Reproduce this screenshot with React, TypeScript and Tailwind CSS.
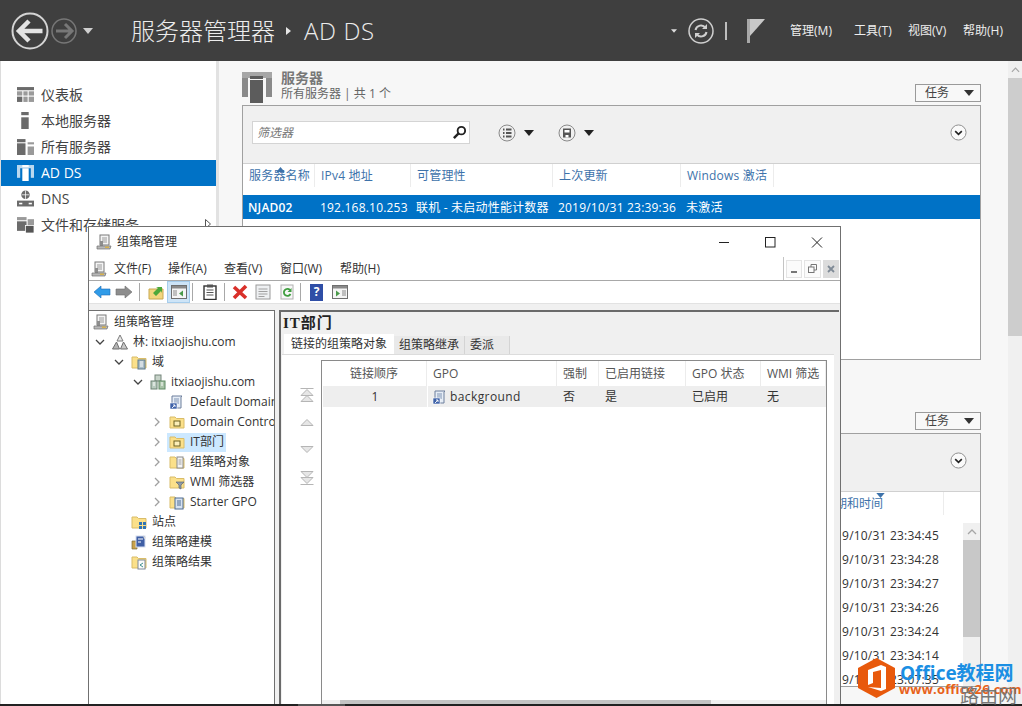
import React from 'react';

const Tri = ({ className }: { className: string }) => (
  <svg viewBox="0 0 10 6" className={className} fill="currentColor">
    <path d="M0 0h10L5 6z" />
  </svg>
);

const CircleChevron = () => (
  <svg viewBox="0 0 18 18" className="w-[17px] h-[17px]" fill="none">
    <circle cx="9" cy="9" r="8" fill="#fafafa" stroke="#8a8a8a" />
    <path d="M5.5 7.5L9 11l3.5-3.5" stroke="#222" strokeWidth="1.7" />
  </svg>
);

const TaskButton = () => (
  <div className="w-[66px] h-[18px] border border-[#9a9a9a] bg-[#f8f8f8] flex items-center justify-between pl-[9px] pr-[6px] text-[12px] text-[#444]">
    <span>任务</span>
    <Tri className="w-[10px] h-[6px] text-[#333]" />
  </div>
);

// sidebar icons
const NavIcon = ({ name, active }: { name: string; active?: boolean }) => {
  const c = active ? '#ffffff' : '#6b6b6b';
  const d = active ? '#b9d8ef' : '#9a9a9a';
  return (
    <svg viewBox="0 0 16 16" className="w-[17px] h-[17px] shrink-0">
      {name === 'dash' && (
        <>
          <rect x="0" y="1" width="16" height="3" fill={c} />
          <rect x="0" y="5" width="5" height="4" fill={d} />
          <rect x="6" y="5" width="4" height="4" fill={d} />
          <rect x="11" y="5" width="5" height="4" fill={d} />
          <rect x="0" y="10" width="5" height="5" fill={c} />
          <rect x="6" y="10" width="4" height="5" fill={d} />
          <rect x="11" y="10" width="5" height="5" fill={d} />
        </>
      )}
      {name === 'local' && (
        <>
          <rect x="4" y="0" width="7" height="3" fill={c} />
          <rect x="4" y="5" width="7" height="11" fill={c} />
        </>
      )}
      {name === 'all' && (
        <>
          <rect x="0" y="1" width="8" height="3" fill={c} />
          <rect x="0" y="5" width="8" height="11" fill={c} />
          <rect x="10" y="4" width="6" height="2" fill={d} />
          <rect x="10" y="8" width="6" height="8" fill={d} />
        </>
      )}
      {name === 'adds' && (
        <>
          <rect x="0" y="1" width="16" height="3" fill={d} />
          <rect x="0" y="1" width="3" height="12" fill={d} />
          <rect x="13" y="1" width="3" height="12" fill={d} />
          <rect x="5" y="4" width="6" height="12" fill={c} />
          <rect x="5" y="1" width="6" height="2" fill={c} />
        </>
      )}
      {name === 'dns' && (
        <>
          <circle cx="8" cy="4.5" r="4" fill={c} />
          <path d="M4.5 4.5h7M8 .5v8" stroke="#fff" strokeWidth="0.7" />
          <rect x="0" y="10" width="16" height="5.5" fill={c} />
          <rect x="2" y="12" width="3" height="1.5" fill="#fff" />
          <rect x="11" y="12" width="3" height="1.5" fill="#fff" />
        </>
      )}
      {name === 'files' && (
        <>
          <rect x="0" y="1" width="9" height="3" fill={d} />
          <rect x="0" y="5" width="9" height="9" fill={c} />
          <rect x="10" y="3" width="6" height="7" fill={d} />
          <rect x="8" y="9" width="8" height="7" fill="#555" stroke="#fff" strokeWidth="0.7" />
        </>
      )}
    </svg>
  );
};

const navItems = [
  { name: 'dash', label: '仪表板' },
  { name: 'local', label: '本地服务器' },
  { name: 'all', label: '所有服务器' },
  { name: 'adds', label: 'AD DS', active: true },
  { name: 'dns', label: 'DNS' },
  { name: 'files', label: '文件和存储服务', more: true },
];

const serverCols = [
  { label: '服务器名称', w: 'w-[72px]' },
  { label: 'IPv4 地址', w: 'w-[96px]' },
  { label: '可管理性', w: 'w-[142px]' },
  { label: '上次更新', w: 'w-[128px]' },
  { label: 'Windows 激活', w: 'w-[93px]' },
];

const serverRow = [
  { label: 'NJAD02', w: 'w-[72px] font-semibold' },
  { label: '192.168.10.253', w: 'w-[96px]' },
  { label: '联机 - 未启动性能计数器', w: 'w-[142px]' },
  { label: '2019/10/31 23:39:36', w: 'w-[128px]' },
  { label: '未激活', w: 'w-[93px]' },
];

const eventTimes = [
  '2019/10/31 23:34:45',
  '2019/10/31 23:34:28',
  '2019/10/31 23:34:27',
  '2019/10/31 23:34:26',
  '2019/10/31 23:34:24',
  '2019/10/31 23:34:14',
  '2019/10/31 23:07:35',
];

// mmc icons
const GpmIcon = () => (
  <svg viewBox="0 0 16 16" className="w-[16px] h-[16px] shrink-0">
    <rect x="4" y="1" width="9" height="10" fill="#f4f4f4" stroke="#7a7a7a" />
    <path d="M6 4h5M6 6h5M6 8h5" stroke="#9a9a9a" />
    <rect x="4" y="7" width="3" height="5" fill="#8d8d8d" />
    <path d="M1 12h14l-1 3H1z" fill="#b8b8b8" stroke="#707070" strokeWidth="0.7" />
    <rect x="9" y="12.5" width="4" height="1.5" fill="#d7b24e" />
  </svg>
);

const ForestIcon = () => (
  <svg viewBox="0 0 16 16" className="w-[16px] h-[16px] shrink-0">
    <path d="M8 1l3 6H5z" fill="#e8e8e8" stroke="#7d7d7d" />
    <path d="M4.5 8l3 7h-7z" fill="#b4b4b4" stroke="#6f6f6f" />
    <path d="M11.5 8l4 7h-7z" fill="#c8c8c8" stroke="#6f6f6f" />
  </svg>
);

const Folder = ({ children }: { children?: React.ReactNode }) => (
  <svg viewBox="0 0 16 16" className="w-[16px] h-[16px] shrink-0">
    <path d="M1 3h5l1.5 1.5H15V14H1z" fill="#fbe08a" stroke="#d9bc68" />
    {children}
  </svg>
);

const DomainIcon = () => (
  <svg viewBox="0 0 16 16" className="w-[16px] h-[16px] shrink-0">
    <rect x="5" y="1" width="6" height="6" fill="#c7d3c9" stroke="#74857a" />
    <rect x="1" y="7" width="6" height="8" fill="#b9cbbf" stroke="#6d8375" />
    <rect x="9" y="7" width="6" height="8" fill="#a9c3a9" stroke="#5f8a65" />
    <path d="M3 9h2M3 11h2M11 9h2M11 11h2" stroke="#fff" />
  </svg>
);

const GpoIcon = () => (
  <svg viewBox="0 0 16 16" className="w-[16px] h-[16px] shrink-0">
    <path d="M3 2h10l-1 1v11H3z" fill="#e6edf6" stroke="#6d7f9c" />
    <path d="M5 5h5M5 7h5M5 9h5" stroke="#7f93b3" />
    <rect x="1" y="9" width="7" height="6" fill="#3e62a8" stroke="#fff" strokeWidth="0.6" />
    <path d="M3 14l3-3M4 11h2v2" stroke="#fff" strokeWidth="0.9" fill="none" />
  </svg>
);

const TreeIcon = ({ name }: { name: string }) => {
  if (name === 'gpm') return <GpmIcon />;
  if (name === 'forest') return <ForestIcon />;
  if (name === 'domain') return <DomainIcon />;
  if (name === 'gpo') return <GpoIcon />;
  if (name === 'domains')
    return (
      <Folder>
        <rect x="7" y="6" width="7" height="9" fill="#a9bcc7" stroke="#5f7a8a" />
        <path d="M9 8h3M9 10h3M9 12h3" stroke="#fff" />
      </Folder>
    );
  if (name === 'ou')
    return (
      <Folder>
        <rect x="5" y="7" width="6" height="5" fill="#fbeeb8" stroke="#6d6020" />
      </Folder>
    );
  if (name === 'objs')
    return (
      <Folder>
        <rect x="8" y="3" width="6" height="11" fill="#f5f5f5" stroke="#8a8a8a" />
        <path d="M9.5 6h3M9.5 8h3M9.5 10h3" stroke="#a0a0a0" />
      </Folder>
    );
  if (name === 'wmi')
    return (
      <Folder>
        <path d="M7 8h8l-3 3v4l-2-1v-3z" fill="#8e9aa6" stroke="#5a6672" strokeWidth="0.7" />
      </Folder>
    );
  if (name === 'starter')
    return (
      <Folder>
        <rect x="6" y="4" width="8" height="11" fill="#d6e2f0" stroke="#4f6d94" />
        <path d="M8 7h4M8 9h4M8 11h4" stroke="#4f6d94" />
      </Folder>
    );
  if (name === 'sites')
    return (
      <Folder>
        <rect x="8" y="8" width="3" height="3" fill="#2f74b5" />
        <rect x="12" y="8" width="3" height="3" fill="#2f74b5" />
        <rect x="8" y="12" width="3" height="3" fill="#2f74b5" />
        <rect x="12" y="12" width="3" height="3" fill="#2f74b5" />
      </Folder>
    );
  if (name === 'model')
    return (
      <svg viewBox="0 0 16 16" className="w-[16px] h-[16px] shrink-0">
        <path d="M1 7h5v8H1z" fill="#c9a24a" stroke="#7a6a3a" strokeWidth="0.7" />
        <rect x="5" y="2" width="9" height="11" fill="#3f5fa5" stroke="#d6def0" />
        <path d="M7 5h5M7 8h3" stroke="#fff" />
        <path d="M12 1l3 3-2 1z" fill="#d8d8d8" />
      </svg>
    );
  return (
    <Folder>
      <rect x="7" y="6" width="7" height="9" fill="#fafafa" stroke="#7f8a9a" />
      <path d="M12 9l-3 2 3 2" stroke="#3f8f8f" fill="none" />
    </Folder>
  );
};

const treeRows = [
  { label: '组策略管理', icon: 'gpm', indent: 'pl-[4px]' },
  { label: '林: itxiaojishu.com', icon: 'forest', indent: 'pl-[4px]', chev: 'open' },
  { label: '域', icon: 'domains', indent: 'pl-[23px]', chev: 'open' },
  { label: 'itxiaojishu.com', icon: 'domain', indent: 'pl-[42px]', chev: 'open' },
  { label: 'Default Domain Policy', icon: 'gpo', indent: 'pl-[61px]', chev: 'none' },
  { label: 'Domain Controllers', icon: 'ou', indent: 'pl-[61px]', chev: 'closed' },
  { label: 'IT部门', icon: 'ou', indent: 'pl-[61px]', chev: 'closed', selected: true },
  { label: '组策略对象', icon: 'objs', indent: 'pl-[61px]', chev: 'closed' },
  { label: 'WMI 筛选器', icon: 'wmi', indent: 'pl-[61px]', chev: 'closed' },
  { label: 'Starter GPO', icon: 'starter', indent: 'pl-[61px]', chev: 'closed' },
  { label: '站点', icon: 'sites', indent: 'pl-[23px]', chev: 'none' },
  { label: '组策略建模', icon: 'model', indent: 'pl-[23px]', chev: 'none' },
  { label: '组策略结果', icon: 'result', indent: 'pl-[23px]', chev: 'none' },
];

const gpoCols = [
  { label: '链接顺序', w: 'w-[105px]', align: 'justify-center' },
  { label: 'GPO', w: 'w-[130px]', align: 'pl-[6px]' },
  { label: '强制', w: 'w-[42px]', align: 'pl-[6px]' },
  { label: '已启用链接', w: 'w-[87px]', align: 'pl-[6px]' },
  { label: 'GPO 状态', w: 'w-[75px]', align: 'pl-[6px]' },
  { label: 'WMI 筛选', w: 'w-[65px]', align: 'pl-[6px]' },
];

const menus = [
  { label: '文件(F)', w: 'w-[54px]' },
  { label: '操作(A)', w: 'w-[56px]' },
  { label: '查看(V)', w: 'w-[56px]' },
  { label: '窗口(W)', w: 'w-[60px]' },
  { label: '帮助(H)', w: 'w-[50px]' },
];

const Toolbar = () => (
  <div className="h-[23px] bg-white border-b border-[#e2e2e2] flex items-center pl-[4px] shrink-0">
    <svg viewBox="0 0 18 16" className="w-[18px] h-[16px] shrink-0">
      <path d="M1 8l7-6v3h9v6H8v3z" fill="#2f9be8" stroke="#1c6db5" strokeWidth="0.6" />
    </svg>
    <svg viewBox="0 0 18 16" className="w-[18px] h-[16px] ml-[4px] shrink-0">
      <path d="M17 8l-7-6v3H1v6h9v3z" fill="#8d8d8d" stroke="#6d6d6d" strokeWidth="0.6" />
    </svg>
    <div className="w-px h-[18px] bg-[#a8a8a8] ml-[6px] shrink-0" />
    <svg viewBox="0 0 16 16" className="w-[16px] h-[16px] ml-[8px] shrink-0">
      <path d="M1 5h14v10H1z" fill="#f3d67e" stroke="#c9a850" />
      <path d="M5 9l5-5-2-1h6v6l-1-2-5 5z" fill="#4ea83a" />
    </svg>
    <div className="w-[23px] h-[22px] ml-[3px] bg-[#cde4f7] border border-[#a6cdec] flex items-center justify-center shrink-0">
      <svg viewBox="0 0 16 14" className="w-[16px] h-[14px]">
        <rect x="0.5" y="0.5" width="15" height="13" fill="#f5f5f5" stroke="#6f6f6f" />
        <rect x="1" y="1" width="14" height="2.5" fill="#8a8a8a" />
        <path d="M2 6h4M2 8h4M2 10h4" stroke="#8a8a8a" />
        <path d="M12 5.5v6l-4-3z" fill="#4a9a4a" />
      </svg>
    </div>
    <div className="w-px h-[18px] bg-[#a8a8a8] ml-[2px] shrink-0" />
    <svg viewBox="0 0 14 16" className="w-[14px] h-[16px] ml-[10px] shrink-0">
      <rect x="1" y="2" width="12" height="13.5" fill="#fff" stroke="#333" strokeWidth="1.4" />
      <rect x="4" y="0.5" width="6" height="3" fill="#555" />
      <path d="M3.5 6h7M3.5 8.5h7M3.5 11h7" stroke="#555" />
    </svg>
    <div className="w-px h-[18px] bg-[#a8a8a8] ml-[7px] shrink-0" />
    <svg viewBox="0 0 16 16" className="w-[16px] h-[16px] ml-[7px] shrink-0">
      <path d="M2 3l12 11M14 2L2 14" stroke="#d9302a" strokeWidth="3.6" />
    </svg>
    <svg viewBox="0 0 16 16" className="w-[16px] h-[16px] ml-[7px] shrink-0">
      <rect x="1" y="1" width="14" height="14" fill="#eef0f2" stroke="#9a9a9a" />
      <path d="M3.5 5h9M3.5 7.5h9M3.5 10h9M3.5 12.5h6" stroke="#a0a0a0" />
    </svg>
    <svg viewBox="0 0 16 16" className="w-[16px] h-[16px] ml-[8px] shrink-0">
      <rect x="2" y="1" width="12" height="14" fill="#f7f7f7" stroke="#b0b0b0" />
      <path d="M11 6a3.5 3.500 0 1 0 0.5 4" fill="none" stroke="#3e9d3e" strokeWidth="1.8" />
      <path d="M12.5 4v4h-4z" fill="#3e9d3e" />
    </svg>
    <div className="w-px h-[18px] bg-[#a8a8a8] ml-[5px] shrink-0" />
    <div className="w-[13px] h-[17px] ml-[9px] bg-[#2f4ea6] flex items-center justify-center text-white text-[12px] font-bold shrink-0">?</div>
    <svg viewBox="0 0 16 14" className="w-[16px] h-[14px] ml-[9px] shrink-0">
      <rect x="0.5" y="0.5" width="15" height="13" fill="#f5f5f5" stroke="#6f6f6f" />
      <rect x="1" y="1" width="14" height="2.5" fill="#8a8a8a" />
      <path d="M10 6h4M10 8h4M10 10h4" stroke="#8a8a8a" />
      <path d="M4 5.5v6l4-3z" fill="#4a9a4a" />
    </svg>
  </div>
);

const MoveIcon = ({ dir, double, className }: { dir: 'up' | 'down'; double?: boolean; className?: string }) => (
  <svg viewBox="0 0 16 16" className={`w-[16px] h-[16px] ${className ?? ''}`} fill="none" stroke="#b5b5b5">
    {dir === 'up' ? (
      <>
        {double && <path d="M1.5 1.500h13" />}
        {double ? <path d="M8 2.500l6 6H2z" fill="#e6e6e6" /> : <path d="M8 4.500l6 6H2z" fill="#e6e6e6" />}
        {double && <path d="M8 8.500l6 6H2z" fill="#e6e6e6" />}
      </>
    ) : (
      <>
        {double ? <path d="M8 13.500l6-6H2z" fill="#e6e6e6" /> : <path d="M8 11.500l6-6H2z" fill="#e6e6e6" />}
        {double && <path d="M8 7.500l6-6H2z" fill="#e6e6e6" />}
        {double && <path d="M1.5 14.500h13" />}
      </>
    )}
  </svg>
);

const GpmWindow = () => (
  <div className="absolute left-[88px] top-[226px] w-[753px] h-[478px] bg-[#f0f0f0] border border-[#707070] border-b-0 flex flex-col overflow-hidden">
    {/* title bar */}
    <div className="h-[30px] bg-white flex items-center pl-[7px] shrink-0">
      <GpmIcon />
      <span className="ml-[5px] text-[12px] text-[#333]">组策略管理</span>
      <svg viewBox="0 0 110 14" className="w-[110px] h-[14px] ml-auto mr-[11px]" fill="none" stroke="#222">
        <path d="M0 7.5h10" />
        <rect x="46.5" y="2.5" width="9.5" height="9.500" />
        <path d="M93 2.5l10 10M103 2.5l-10 10" />
      </svg>
    </div>
    {/* menu bar */}
    <div className="h-[24px] bg-white border-b border-[#a8a8a8] flex items-center pl-[2px] shrink-0 text-[12px] text-[#333]">
      <GpmIcon />
      <div className="flex ml-[7px]">
        {menus.map((m) => (
          <span key={m.label} className={`${m.w} whitespace-nowrap`}>{m.label}</span>
        ))}
      </div>
      <div className="ml-auto mr-[1px] h-[23px] flex items-center gap-[2px] border-l border-[#c4c4c4] pl-[2px]">
        <div className="w-[16px] h-[18px] bg-[#fbfbfb] border border-[#e4e4e4] flex items-end justify-center pb-[4px]">
          <div className="w-[6px] h-[2px] bg-[#777]" />
        </div>
        <div className="w-[17px] h-[18px] bg-[#fbfbfb] border border-[#e4e4e4] flex items-center justify-center">
          <svg viewBox="0 0 9 9" className="w-[9px] h-[9px]" fill="none" stroke="#777">
            <rect x="0.5" y="3" width="5.5" height="5.5" />
            <path d="M3 3V0.5h5.500V6H6" />
          </svg>
        </div>
        <div className="w-[16px] h-[18px] bg-[#dcdcdc] flex items-center justify-center">
          <svg viewBox="0 0 8 8" className="w-[8px] h-[8px]" stroke="#7f8a96" strokeWidth="1.8">
            <path d="M1 1l6 6M7 1L1 7" />
          </svg>
        </div>
      </div>
    </div>
    <Toolbar />
    {/* body */}
    <div className="flex-1 flex pt-[6px] min-h-0">
      <div className="w-[186px] bg-white border-r border-t border-[#6f6f6f] overflow-hidden pt-[1px] shrink-0">
        {treeRows.map((r) => (
          <div key={r.label} className={`h-[20px] flex items-center whitespace-nowrap text-[12px] text-[#333] ${r.indent}`}>
            {r.chev && (
              <div className="w-[19px] shrink-0 flex pl-[2px]">
                {r.chev === 'open' && (
                  <svg viewBox="0 0 10 10" className="w-[10px] h-[10px]" fill="none" stroke="#444" strokeWidth="1.3">
                    <path d="M1 3l4 4 4-4" />
                  </svg>
                )}
                {r.chev === 'closed' && (
                  <svg viewBox="0 0 10 10" className="w-[10px] h-[10px]" fill="none" stroke="#a0a0a0" strokeWidth="1.3">
                    <path d="M3 1l4 4-4 4" />
                  </svg>
                )}
              </div>
            )}
            {r.selected ? (
              <div className="flex items-center h-[19px] -ml-[2px] pl-[2px] pr-[2px] bg-[#cce8ff]">
                <TreeIcon name={r.icon} />
                <span className="ml-[5px]">{r.label}</span>
              </div>
            ) : (
              <>
                <TreeIcon name={r.icon} />
                <span className="ml-[5px]">{r.label}</span>
              </>
            )}
          </div>
        ))}
      </div>
      <div className="w-[4px] shrink-0" />
      <div className="flex-1 border-l-2 border-t-2 border-[#6a6a6a] flex flex-col mr-[1px] min-w-0">
        <div className="h-[23px] pl-[2px] pt-[1px] text-[15px] leading-[20px] tracking-[1px] font-bold text-[#222] font-['Liberation_Serif','Noto_Sans_CJK_SC',serif]">IT部门</div>
        <div className="h-[19px] flex items-end pl-[3px] text-[12px] text-[#333] shrink-0">
          <div className="h-[20px] w-[110px] bg-white flex items-center justify-center">链接的组策略对象</div>
          <div className="h-[18px] w-[71px] bg-[#e9e9e9] border-r border-[#d4d4d4] flex items-center justify-center">组策略继承</div>
          <div className="h-[18px] w-[45px] bg-[#e9e9e9] border-r border-[#d4d4d4] flex items-center pl-[5px]">委派</div>
        </div>
        <div className="flex-1 bg-white ml-[1px] mr-[5px] border-t border-[#dcdcdc] flex pt-[5px] pl-[14px] pr-[7px] min-h-0">
          <div className="w-[24px] pt-[27px] flex flex-col items-center shrink-0 -ml-[1px] mr-[2px]">
            <MoveIcon dir="up" double />
            <MoveIcon dir="up" className="mt-[12px]" />
            <MoveIcon dir="down" className="mt-[10px]" />
            <MoveIcon dir="down" double className="mt-[13px]" />
          </div>
          <div className="flex-1 border-l border-t border-r border-[#8a8a8a] flex flex-col min-w-0 relative">
            <div className="flex h-[25px] text-[12px] text-[#555] shrink-0">
              {gpoCols.map((c) => (
                <div key={c.label} className={`${c.w} flex items-center whitespace-nowrap overflow-hidden border-r border-[#ececec] ${c.align}`}>{c.label}</div>
              ))}
            </div>
            <div className="flex h-[21px] text-[12px] text-[#333] bg-[#eeeeee] ml-[1px] shrink-0">
              <div className="w-[104px] text-center leading-[21px]">1</div>
              <div className="w-[130px] pl-[4px] bg-[#eeeeee] flex items-center gap-[2px] border-l border-white tracking-[0.4px]"><GpoIcon /><span>background</span></div>
              <div className="w-[42px] pl-[6px] leading-[21px]">否</div>
              <div className="w-[87px] pl-[6px] leading-[21px]">是</div>
              <div className="w-[75px] pl-[6px] leading-[21px]">已启用</div>
              <div className="w-[65px] pl-[6px] leading-[21px]">无</div>
            </div>
            <div className="mt-auto h-[4px] bg-[#f0f0f0] flex pl-[18px] shrink-0">
              <div className="w-[371px] h-[4px] bg-[#c4c4c4]" />
            </div>
          </div>
        </div>
      </div>
    </div>
  </div>
);

const Watermark = () => (
  <div className="absolute left-[858px] top-[658px] w-[164px] h-[46px]">
    <svg viewBox="0 0 37 40" className="absolute left-0 top-0 w-[37px] h-[40px]">
      <path d="M18.5 0L37 10v20L18.5 40 0 30V10z" fill="#e8590c" />
      <path d="M10 12l13-5 5 2v22l-5 2-13-4 13 1V12l-8 2v11l-5 2z" fill="#fff" />
    </svg>
    <div className="absolute left-[42px] top-[4px] text-[19px] leading-[22px] font-bold text-[#1b8fe3] whitespace-nowrap">Office教程网</div>
    <div className="absolute left-[41px] top-[25px] text-[13px] leading-[12px] font-bold text-[#e8621a] whitespace-nowrap tracking-[0.2px]">www.office26.com</div>
    <div className="absolute left-[102px] top-[28px] text-[19px] leading-[20px] text-[#777] whitespace-nowrap">路由网</div>
  </div>
);

export default function App() {
  return (
    <div className="relative w-[1022px] h-[706px] overflow-hidden flex flex-col bg-[#f7f7f7] font-['Open_Sans','Noto_Sans_CJK_SC',sans-serif]">
      {/* top bar */}
      <div className="h-[61px] bg-[#3f3f3f] flex items-center shrink-0">
        <svg viewBox="0 0 38 38" className="w-[38px] h-[38px] ml-[11px]" fill="none">
          <circle cx="19" cy="19" r="17.5" stroke="#d4d4d4" strokeWidth="2" />
          <path d="M7.5 19h24M18 9L8 19l10 10" stroke="#e4e4e4" strokeWidth="4.5" />
        </svg>
        <svg viewBox="0 0 26 26" className="w-[26px] h-[26px] ml-[2px]" fill="none">
          <circle cx="13" cy="13" r="12" stroke="#777" strokeWidth="1.5" />
          <path d="M21 13H5M14 6l7 7-7 7" stroke="#777" strokeWidth="3" />
        </svg>
        <Tri className="w-[10px] h-[6px] ml-[6px] text-[#cfcfcf]" />
        <div className="ml-[38px] text-[24px] leading-[32px] font-light text-[#ececec] whitespace-nowrap">服务器管理器</div>
        <svg viewBox="0 0 5 8" className="w-[5px] h-[8px] ml-[11px]" fill="#e6e6e6"><path d="M0 0l5 4-5 4z" /></svg>
        <div className="ml-[13px] text-[24px] leading-[32px] font-light tracking-[0.6px] text-[#ececec] whitespace-nowrap">AD DS</div>
        <Tri className="w-[6px] h-[4px] ml-auto text-[#dcdcdc]" />
        <svg viewBox="0 0 26 26" className="w-[26px] h-[26px] ml-[11px]" fill="none" stroke="#cfcfcf">
          <circle cx="13" cy="13" r="12" strokeWidth="1.5" />
          <path d="M7.5 12a5.5 5.500 0 0 1 10-2M18.5 14a5.5 5.500 0 0 1-10 2" strokeWidth="2" />
          <path d="M19 6v5h-5zM7 20v-5h5z" fill="#cfcfcf" stroke="none" />
        </svg>
        <div className="w-[2px] h-[18px] bg-[#bdbdbd] ml-[11px]" />
        <svg viewBox="0 0 18 24" className="w-[18px] h-[24px] ml-[20px]">
          <rect x="0" y="0" width="3" height="24" fill="#a8a8a8" />
          <path d="M3 0h15L3 17z" fill="#c8c8c8" />
        </svg>
        <div className="flex ml-[25px] mr-[19px] text-[12px] text-[#eeeeee] whitespace-nowrap">
          <span className="w-[64px]">管理(M)</span>
          <span className="w-[54px]">工具(T)</span>
          <span className="w-[55px]">视图(V)</span>
          <span>帮助(H)</span>
        </div>
      </div>

      <div className="flex-1 flex min-h-0">
        {/* sidebar */}
        <div className="w-[219px] shrink-0 border-l border-[#dcdcdc] border-r-[3px] border-r-[#e2e2e2] bg-white pt-[21px]">
          {navItems.map((n) => (
            <div
              key={n.name}
              className={
                n.active
                  ? 'h-[26px] flex items-center pl-[16px] pr-[5px] pb-[2px] text-[14px] text-white bg-[#0072c6]'
                  : 'h-[26px] flex items-center pl-[16px] pr-[5px] pb-[2px] text-[14px] text-[#444]'
              }
            >
              <NavIcon name={n.name} active={n.active} />
              <span className="ml-[7px] whitespace-nowrap">{n.label}</span>
              {n.more && (
                <svg viewBox="0 0 6 10" className="w-[6px] h-[10px] ml-auto" fill="none" stroke="#555"><path d="M0.5 0.5l5 4.500-5 4.500z" /></svg>
              )}
            </div>
          ))}
        </div>

        {/* content */}
        <div className="flex-1 flex flex-col pl-[23px] pr-[27px] min-w-0">
          <div className="h-[44px] flex items-end pb-[3px] shrink-0">
            <svg viewBox="0 0 30 32" className="w-[30px] h-[32px] self-start mt-[10px]">
              <rect x="0" y="1" width="30" height="6" fill="#a6a6a6" />
              <rect x="0" y="7" width="6" height="19" fill="#8a8a8a" />
              <rect x="24" y="7" width="6" height="19" fill="#8a8a8a" />
              <rect x="8" y="5" width="13" height="3" fill="#5c5c5c" />
              <rect x="8" y="9" width="13" height="23" fill="#5c5c5c" />
            </svg>
            <div className="ml-[9px] self-start mt-[9px]">
              <div className="text-[14px] leading-[16px] font-bold text-[#777]">服务器</div>
              <div className="text-[12px] leading-[16px] text-[#666]">所有服务器 | 共 1 个</div>
            </div>
            <div className="ml-auto"><TaskButton /></div>
          </div>

          <div className="h-[255px] border border-[#a0a0a0] bg-white flex flex-col shrink-0">
            <div className="h-[58px] bg-[#f0f0f0] border-b border-[#d0d0d0] flex items-center pl-[9px] pr-[13px] pb-[4px] shrink-0">
              <div className="w-[218px] h-[23px] bg-white border border-[#d4d4d4] flex items-center justify-between pl-[4px] pr-[2px] text-[12px] italic text-[#777]">
                <span>筛选器</span>
                <svg viewBox="0 0 16 16" className="w-[15px] h-[15px]" fill="none" stroke="#222" strokeWidth="2">
                  <circle cx="10" cy="6" r="4" />
                  <path d="M7 9l-5 5" strokeWidth="2.6" />
                </svg>
              </div>
              <svg viewBox="0 0 18 18" className="w-[18px] h-[18px] ml-[28px]" fill="none">
                <circle cx="9" cy="9" r="8" stroke="#8a8a8a" />
                <path d="M5 5.5h1.500M5 9h1.500M5 12.5h1.500M8 5.5h5.500M8 9h5.500M8 12.5h5.500" stroke="#555" strokeWidth="1.8" />
              </svg>
              <Tri className="w-[10px] h-[6px] ml-[8px] text-[#222]" />
              <svg viewBox="0 0 18 18" className="w-[18px] h-[18px] ml-[24px]" fill="none">
                <circle cx="9" cy="9" r="8" stroke="#8a8a8a" />
                <path d="M5 4.5h8v9H5z" fill="#555" />
                <rect x="6.5" y="6" width="5" height="2.5" fill="#fff" />
                <rect x="7.5" y="11" width="3" height="2.5" fill="#fff" />
              </svg>
              <Tri className="w-[10px] h-[6px] ml-[8px] text-[#222]" />
              <div className="ml-auto"><CircleChevron /></div>
            </div>
            <div className="h-[31px] flex pb-[8px] text-[12px] tracking-[0.2px] text-[#3d72aa] relative shrink-0">
              {serverCols.map((c) => (
                <div key={c.label} className={`${c.w} flex items-center whitespace-nowrap border-r border-[#ececec] pl-[6px]`}>{c.label}</div>
              ))}
              <Tri className="absolute left-[33px] top-[3px] w-[9px] h-[5px] text-[#3d72aa] rotate-180" />
            </div>
            <div className="h-[24px] flex bg-[#0072c6] pt-[2px] text-[12px] tracking-[0.2px] text-white shrink-0">
              {serverRow.map((c) => (
                <div key={c.label} className={`${c.w} flex items-center whitespace-nowrap pl-[5px]`}>{c.label}</div>
              ))}
            </div>
          </div>

          <div className="h-[53px] flex items-end justify-end shrink-0">
            <div className="mb-[-17px]"><TaskButton /></div>
          </div>

          <div className="h-[254px] mt-[20px] border border-[#a0a0a0] bg-white flex flex-col shrink-0">
            <div className="h-[58px] bg-[#f0f0f0] border-b border-[#d0d0d0] flex items-center justify-end pr-[13px] pb-[4px] shrink-0">
              <CircleChevron />
            </div>
            <div className="h-[31px] flex pb-[8px] text-[12px] text-[#3d72aa] relative shrink-0">
              <div className="ml-[578px] w-[123px] flex items-center pl-[2px] border-r border-[#ececec] whitespace-nowrap">日期和时间</div>
              <Tri className="absolute left-[633px] top-[1px] w-[9px] h-[5px] text-[#3d72aa]" />
            </div>
            <div className="flex-1 flex min-h-0">
              <div className="flex-1 overflow-hidden pt-[1px] pr-[24px] text-[12px] tracking-[0.2px] text-[#333] text-right">
                {eventTimes.map((t, i) => (
                  <div key={i} className="h-[24px] leading-[24px]">{t}</div>
                ))}
              </div>
              <div className="w-[17px] bg-[#f0f0f0] flex flex-col shrink-0">
                <div className="h-[17px] flex items-center justify-center">
                  <svg viewBox="0 0 10 6" className="w-[10px] h-[6px]" fill="none" stroke="#a6a6a6" strokeWidth="1.3"><path d="M1 5l4-4 4 4" /></svg>
                </div>
                <div className="h-[97px] bg-[#c8c8c8]" />
              </div>
            </div>
          </div>
        </div>

        {/* page scrollbar */}
        <div className="w-[14px] bg-[#f0f0f0] flex flex-col shrink-0">
          <div className="h-[17px] flex items-center justify-center">
            <svg viewBox="0 0 10 6" className="w-[9px] h-[6px]" fill="none" stroke="#a6a6a6" strokeWidth="1.3"><path d="M1 5l4-4 4 4" /></svg>
          </div>
          <div className="h-[258px] bg-[#cdcdcd]" />
        </div>
      </div>

      {/* taskbar edge */}
      <div className="h-[2px] bg-[#222222] flex shrink-0">
        <div className="w-[298px]" />
        <div className="w-[47px] bg-[#555555]" />
      </div>

      <GpmWindow />
      <Watermark />
    </div>
  );
}
